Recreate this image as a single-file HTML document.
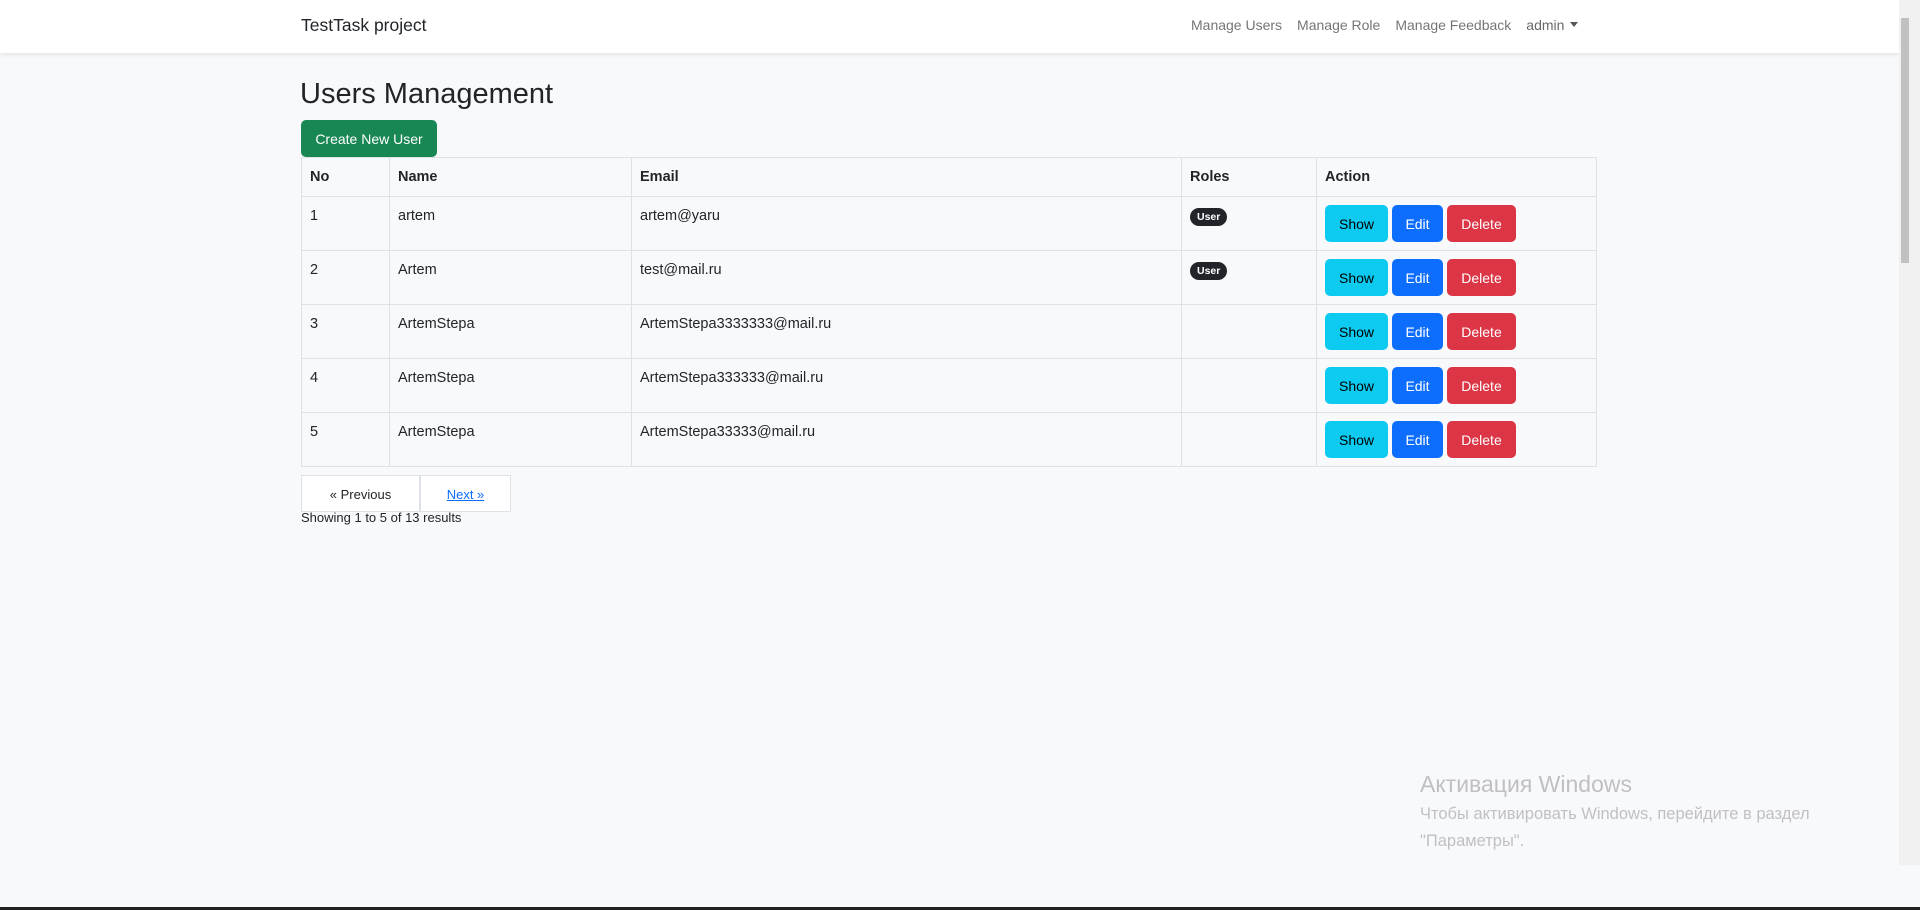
<!DOCTYPE html>
<html><head><meta charset="utf-8"><style>
*{box-sizing:border-box;margin:0;padding:0}
body{width:1920px;height:910px;overflow:hidden;background:#f8f9fa;font-family:"Liberation Sans",sans-serif;font-size:14.5px;color:#212529;position:relative}
.nav{position:absolute;left:0;top:0;width:1899px;height:53px;background:#fff;box-shadow:0 2px 4px rgba(0,0,0,.08)}
.brand{position:absolute;left:301px;top:15px;font-size:17.5px;color:#212529}
.links{position:absolute;left:1191px;top:17px;font-size:14px;color:rgba(0,0,0,.55)}
.links span{margin-right:15px}
.caret{display:inline-block;border-left:4px solid transparent;border-right:4px solid transparent;border-top:5px solid #555;vertical-align:3px;margin-left:6px}
h1{position:absolute;left:300px;top:78px;font-size:29px;font-weight:normal}
.create{position:absolute;left:301px;top:120px;width:136px;height:37px;background:#198754;color:#fff;border-radius:5px;font-size:14px;line-height:39px;text-align:center}
table{position:absolute;left:301px;top:157px;width:1296px;border-collapse:collapse}
td,th{border:1px solid #dee2e6;vertical-align:top;text-align:left;padding:8px 8px;font-weight:normal}
th{font-weight:bold;height:39px;padding-top:11px}
td{height:54px;padding-top:11px}
.badge{display:inline-block;background:#212529;color:#fff;font-size:10.5px;font-weight:bold;border-radius:10px;padding:3px 7px;margin-top:0}
.b{display:inline-block;height:37px;line-height:39px;border-radius:5px;font-size:14px;text-align:center;margin-right:4px;margin-top:-3px}
.s{background:#0dcaf0;color:#000;width:63px}.e{background:#0d6efd;color:#fff;width:51px}.d{background:#dc3545;color:#fff;width:69px}
.pg{position:absolute;top:475px;height:37px;background:#fff;border:1px solid #dee2e6;font-size:13px;line-height:37px;text-align:center}
.show{position:absolute;left:301px;top:510px;font-size:13px}
.wm{position:absolute;left:1420px;color:#c0c0c3}
.sb{position:absolute;left:1899px;top:0;width:21px;height:865px;background:#f1f1f1}
.th{position:absolute;left:1901px;top:18px;width:8px;height:245px;background:#c1c1c1}
</style></head><body>
<div class="nav"><div class="brand">TestTask project</div>
<div class="links"><span>Manage Users</span><span>Manage Role</span><span>Manage Feedback</span><span style="color:rgba(0,0,0,.6)">admin<i class="caret"></i></span></div></div>
<h1>Users Management</h1>
<div class="create">Create New User</div>
<table>
<tr><th style="width:88px">No</th><th style="width:242px">Name</th><th style="width:550px">Email</th><th style="width:135px">Roles</th><th>Action</th></tr>
<tr><td>1</td><td>artem</td><td>artem@yaru</td><td><span class="badge">User</span></td><td><span class="b s">Show</span><span class="b e">Edit</span><span class="b d">Delete</span></td></tr>
<tr><td>2</td><td>Artem</td><td>test@mail.ru</td><td><span class="badge">User</span></td><td><span class="b s">Show</span><span class="b e">Edit</span><span class="b d">Delete</span></td></tr>
<tr><td>3</td><td>ArtemStepa</td><td>ArtemStepa3333333@mail.ru</td><td></td><td><span class="b s">Show</span><span class="b e">Edit</span><span class="b d">Delete</span></td></tr>
<tr><td>4</td><td>ArtemStepa</td><td>ArtemStepa333333@mail.ru</td><td></td><td><span class="b s">Show</span><span class="b e">Edit</span><span class="b d">Delete</span></td></tr>
<tr><td>5</td><td>ArtemStepa</td><td>ArtemStepa33333@mail.ru</td><td></td><td><span class="b s">Show</span><span class="b e">Edit</span><span class="b d">Delete</span></td></tr>
</table>
<div class="pg" style="left:301px;width:119px">« Previous</div>
<div class="pg" style="left:420px;width:91px;color:#0d6efd;text-decoration:underline">Next »</div>
<div class="show">Showing 1 to 5 of 13 results</div>
<div class="wm" style="top:771px;font-size:23px">Активация Windows</div>
<div class="wm" style="top:805px;font-size:16.5px">Чтобы активировать Windows, перейдите в раздел</div>
<div class="wm" style="top:832px;font-size:16.5px">"Параметры".</div>
<div class="sb"></div><div class="th"></div>
<div style="position:absolute;left:0;top:907px;width:1920px;height:3px;background:#222"></div>
</body></html>
